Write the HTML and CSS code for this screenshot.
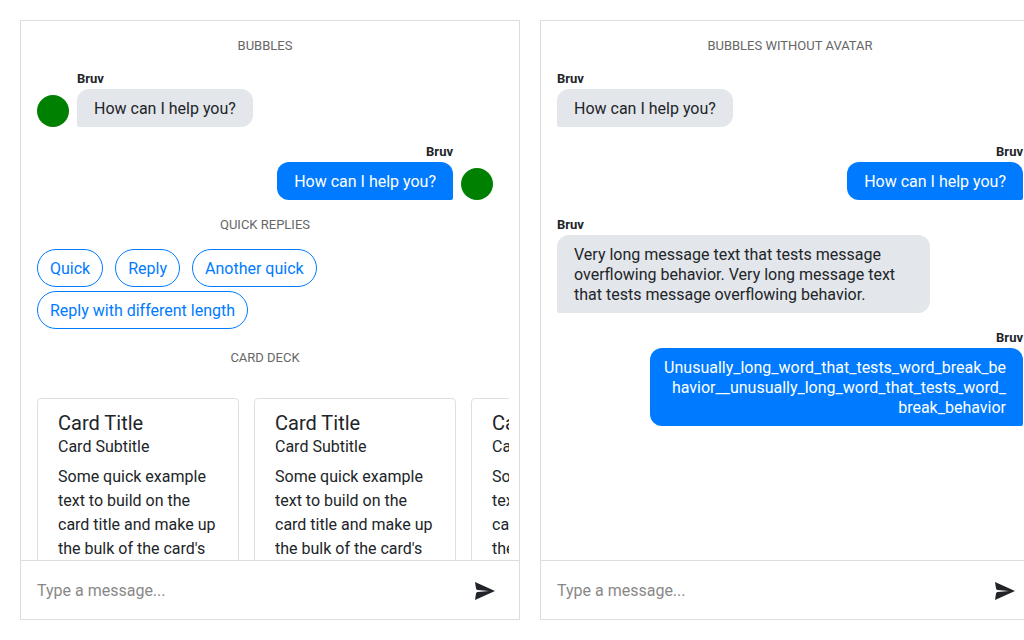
FILE: index.html
```html
<!DOCTYPE html>
<html lang="en">
<head>
<meta charset="utf-8">
<title>Chat components</title>
<link rel="stylesheet" href="styles.css">
</head>
<body>
<main class="gallery">
  <section class="chat">
    <div class="chat-body chat-body-gutter">
      <h2 class="heading">BUBBLES</h2>
      <div class="message">
        <span class="avatar"></span>
        <div class="message-main">
          <strong class="name">Bruv</strong>
          <p class="bubble">How can I help you?</p>
        </div>
      </div>
      <div class="message message-own">
        <span class="avatar"></span>
        <div class="message-main">
          <strong class="name">Bruv</strong>
          <p class="bubble">How can I help you?</p>
        </div>
      </div>
      <h2 class="heading">QUICK REPLIES</h2>
      <div class="replies">
        <button class="reply" type="button">Quick</button>
        <button class="reply" type="button">Reply</button>
        <button class="reply" type="button">Another quick</button>
        <button class="reply" type="button">Reply with different length</button>
      </div>
      <h2 class="heading">CARD DECK</h2>
      <div class="deck">
        <article class="card">
          <h3 class="card-title">Card Title</h3>
          <h4 class="card-subtitle">Card Subtitle</h4>
          <p class="card-text">Some quick example text to build on the card title and make up the bulk of the card's content.</p>
        </article>
        <article class="card">
          <h3 class="card-title">Card Title</h3>
          <h4 class="card-subtitle">Card Subtitle</h4>
          <p class="card-text">Some quick example text to build on the card title and make up the bulk of the card's content.</p>
        </article>
        <article class="card">
          <h3 class="card-title">Card Title</h3>
          <h4 class="card-subtitle">Card Subtitle</h4>
          <p class="card-text">Some quick example text to build on the card title and make up the bulk of the card's content.</p>
        </article>
      </div>
    </div>
    <form class="composer">
      <input class="composer-input" type="text" placeholder="Type a message..." aria-label="Message">
      <button class="send" type="button" aria-label="Send">
        <svg width="20" height="18" viewBox="0 0 20 18" fill="currentColor" aria-hidden="true"><path d="M0 0 20 9 0 18 1 11.5Q1.3 10.2 2.6 10L14 9 2.6 8Q1.3 7.8 1 6.5Z"/></svg>
      </button>
    </form>
  </section>

  <section class="chat">
    <div class="chat-body">
      <h2 class="heading">BUBBLES WITHOUT AVATAR</h2>
      <div class="message">
        <div class="message-main">
          <strong class="name">Bruv</strong>
          <p class="bubble">How can I help you?</p>
        </div>
      </div>
      <div class="message message-own">
        <div class="message-main">
          <strong class="name">Bruv</strong>
          <p class="bubble">How can I help you?</p>
        </div>
      </div>
      <div class="message">
        <div class="message-main">
          <strong class="name">Bruv</strong>
          <p class="bubble">Very long message text that tests message overflowing behavior. Very long message text that tests message overflowing behavior.</p>
        </div>
      </div>
      <div class="message message-own">
        <div class="message-main">
          <strong class="name">Bruv</strong>
          <p class="bubble bubble-long">Unusually_long_word_that_tests_word_break_be<wbr>havior__unusually_long_word_that_tests_word_<wbr>break_behavior</p>
        </div>
      </div>
    </div>
    <form class="composer">
      <input class="composer-input" type="text" placeholder="Type a message..." aria-label="Message">
      <button class="send" type="button" aria-label="Send">
        <svg width="20" height="18" viewBox="0 0 20 18" fill="currentColor" aria-hidden="true"><path d="M0 0 20 9 0 18 1 11.5Q1.3 10.2 2.6 10L14 9 2.6 8Q1.3 7.8 1 6.5Z"/></svg>
      </button>
    </form>
  </section>
</main>
</body>
</html>
```
FILE: styles.css
```css
* {
  box-sizing: border-box;
}

body {
  margin: 0;
  overflow-x: hidden;
  background: #fff;
  color: #212529;
  font: 16px/20px Roboto, "Liberation Sans", sans-serif;
}

h2, h3, h4, p {
  margin: 0;
  font-weight: 400;
}

.gallery {
  display: flex;
  gap: 20px;
  height: 100vh;
  padding: 20px;
}

.chat {
  display: flex;
  flex: 0 0 500px;
  flex-direction: column;
  min-width: 0;
  border: 1px solid #ddd;
}

.chat-body {
  display: flex;
  flex: 1;
  flex-direction: column;
  gap: 16px;
  min-height: 0;
  padding: 16px;
  overflow: hidden;
}

.chat-body > * {
  flex-shrink: 0;
}

.chat-body-gutter {
  margin-right: 10px;
}

.heading {
  color: #666;
  font-size: 13px;
  line-height: 17px;
  text-align: center;
}

.message {
  display: flex;
  align-items: flex-end;
  gap: 8px;
}

.message-own {
  flex-direction: row-reverse;
  text-align: right;
}

.avatar {
  width: 32px;
  height: 32px;
  border-radius: 50%;
  background: #008000;
}

.message-main {
  display: flex;
  flex-direction: column;
  align-items: flex-start;
  gap: 1px;
  max-width: 80%;
}

.message-own .message-main {
  align-items: flex-end;
}

.name {
  font-size: 13px;
  line-height: 18px;
}

.bubble {
  max-width: 100%;
  padding: 10px 17px 8px;
  border-radius: 12px 12px 12px 2px;
  background: #e3e6ea;
  overflow-wrap: anywhere;
}

.message-own .bubble {
  border-radius: 12px 12px 2px 12px;
  background: #007bff;
  color: #fff;
}

.bubble-long {
  width: 100%;
  padding-left: 12px;
}

.replies {
  display: flex;
  flex-wrap: wrap;
  gap: 4px 12px;
  padding-bottom: 4px;
}

.reply {
  padding: 9px 12px 7px;
  border: 1px solid #007bff;
  border-radius: 19px;
  background: #fff;
  color: #007bff;
  font: inherit;
}

.deck {
  display: flex;
  gap: 15px;
  margin: 0 -16px;
  padding: 16px;
  overflow: hidden;
}

.card {
  flex: 0 0 202px;
  padding: 12px 20px;
  border: 1px solid #dfdfdf;
  border-radius: 4px;
}

.card-title {
  font-size: 20px;
  line-height: 24px;
}

.card-subtitle {
  font-size: 16px;
  line-height: 24px;
}

.card-text {
  margin-top: 6px;
  line-height: 24px;
}

.composer {
  display: flex;
  align-items: center;
  padding: 19px 24px 18px 16px;
  border-top: 1px solid #ddd;
}

.composer-input {
  flex: 1;
  min-width: 0;
  padding: 1px 0 0;
  border: 0;
  outline: 0;
  background: none;
  color: inherit;
  font: inherit;
}

.composer-input::placeholder {
  color: #888;
}

.send {
  display: flex;
  padding: 0;
  border: 0;
  background: none;
  color: #212529;
}
```
